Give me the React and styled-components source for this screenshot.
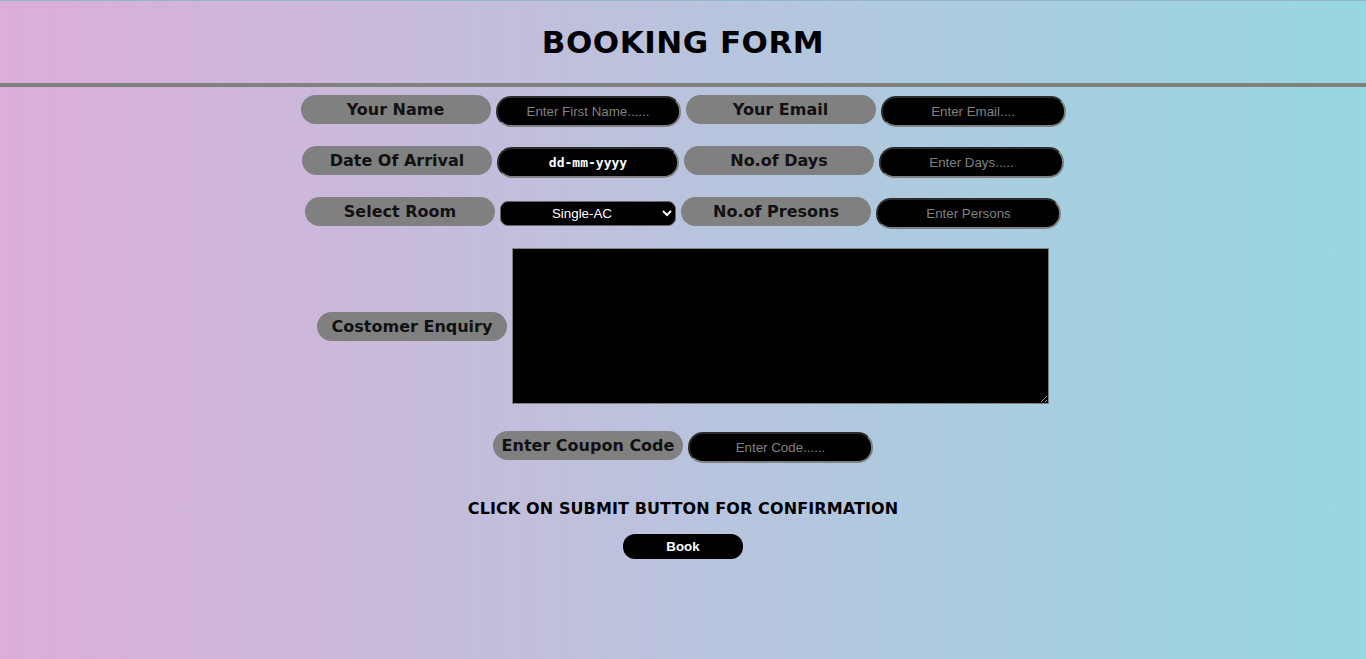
import styled, { createGlobalStyle } from "styled-components";

const Global = createGlobalStyle`
    html, body {
        margin: 0;
        padding: 0;
    }
    body {
        font-family: "DejaVu Sans", Verdana, sans-serif;
    }
`;

const Page = styled.div`
    min-height: 100vh;
    box-sizing: border-box;
    border-top: 1px solid #93b7c6;
    background: linear-gradient(to right, #dcaed9, #97d8e1);
`;

const Header = styled.header`
    height: 82px;
    display: flex;
    align-items: center;
    justify-content: center;
`;

const Title = styled.h1`
    margin: 0;
    font-family: "DejaVu Sans", sans-serif;
    font-size: 31px;
    font-weight: bold;
    color: #000;
    letter-spacing: 0.5px;
`;

const Divider = styled.div`
    height: 4px;
    background: #808080;
`;

const Form = styled.form`
    display: flex;
    flex-direction: column;
    align-items: center;
    padding-top: 8px;
`;

// rows of label + field pairs, each one centred on its own
const Row = styled.div`
    display: flex;
    align-items: ${(p) => (p.$center ? "center" : "flex-start")};
    justify-content: center;
    gap: 5px;
    margin-bottom: ${(p) => p.$space || 19}px;
`;

const Label = styled.label`
    width: 190px;
    height: 29px;
    line-height: 29px;
    border-radius: 15px;
    background: #808080;
    color: #111;
    font-family: "DejaVu Sans", Verdana, sans-serif;
    font-size: 16px;
    font-weight: bold;
    text-align: center;
`;

const Input = styled.input`
    box-sizing: border-box;
    width: 185px;
    height: 31px;
    margin-top: 1px;
    border: 2px inset #808080;
    border-radius: 15px;
    background: #000;
    color: #fff;
    font-family: "Liberation Sans", Arial, sans-serif;
    font-size: 13.33px;
    text-align: center;
    outline: none;

    &::placeholder {
        color: #808080;
    }
`;

const DateInput = styled(Input)`
    width: 182px;
    font-family: "DejaVu Sans Mono", monospace;
    font-size: 13px;
    font-weight: 600;
    word-spacing: 1px;

    &::placeholder {
        color: #fff;
    }
`;

const Select = styled.select`
    box-sizing: border-box;
    width: 176px;
    height: 25px;
    margin-top: 4px;
    border: 1px solid #666;
    border-radius: 8px;
    background: #000;
    color: #fff;
    font-family: "Liberation Sans", Arial, sans-serif;
    font-size: 13.33px;
    text-align: center;
    text-align-last: center;
`;

const TextArea = styled.textarea`
    box-sizing: border-box;
    width: 537px;
    height: 156px;
    border: 1px solid #808080;
    background: #000;
    color: #fff;
`;

const Note = styled.h3`
    margin: 0 0 16px;
    font-family: "DejaVu Sans", Verdana, sans-serif;
    font-size: 16px;
    font-weight: bold;
    letter-spacing: 0.1px;
    color: #000;
`;

const BookButton = styled.button`
    width: 120px;
    height: 25px;
    border: none;
    border-radius: 12px;
    background: #000;
    color: #fff;
    font-family: "Liberation Sans", Arial, sans-serif;
    font-size: 13.33px;
    font-weight: bold;
    cursor: pointer;
`;

const App = () => {
    return (
        <Page>
            <Global />
            <Header>
                <Title>BOOKING FORM</Title>
            </Header>
            <Divider />
            <Form onSubmit={(e) => e.preventDefault()}>
                <Row>
                    <Label>Your Name</Label>
                    <Input placeholder="Enter First Name......" />
                    <Label>Your Email</Label>
                    <Input placeholder="Enter Email...." />
                </Row>
                <Row>
                    <Label>Date Of Arrival</Label>
                    <DateInput placeholder="dd-mm-yyyy" />
                    <Label>No.of Days</Label>
                    <Input placeholder="Enter Days....." />
                </Row>
                <Row>
                    <Label>Select Room</Label>
                    <Select defaultValue="single-ac">
                        <option value="single-ac">Single-AC</option>
                        <option value="double-ac">Double-AC</option>
                        <option value="single">Single-Non AC</option>
                        <option value="double">Double-Non AC</option>
                    </Select>
                    <Label>No.of Presons</Label>
                    <Input placeholder="Enter Persons" />
                </Row>
                <Row $center $space={27}>
                    <Label>Costomer Enquiry</Label>
                    <TextArea />
                </Row>
                <Row $space={36}>
                    <Label>Enter Coupon Code</Label>
                    <Input placeholder="Enter Code......" />
                </Row>
                <Note>CLICK ON SUBMIT BUTTON FOR CONFIRMATION</Note>
                <BookButton type="submit">Book</BookButton>
            </Form>
        </Page>
    );
};

export default App;
